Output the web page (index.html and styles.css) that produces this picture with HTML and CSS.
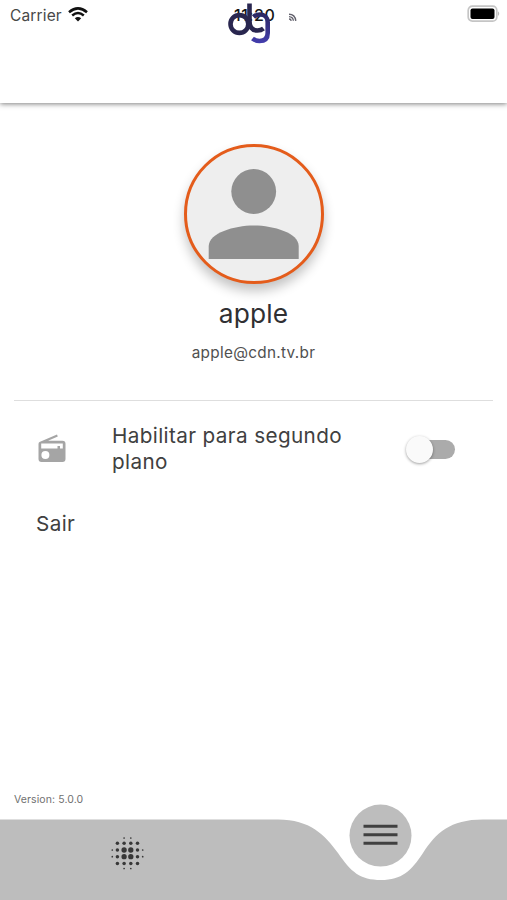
FILE: index.html
```html
<!DOCTYPE html>
<html lang="pt-BR">
<head>
<meta charset="utf-8">
<title>Perfil</title>
<link rel="stylesheet" href="styles.css">
</head>
<body>
<div class="app">
  <header class="header">
    <span class="carrier">Carrier</span>
    <svg class="wifi" width="20" height="15" viewBox="0 0 20 15"><path d="M1 5.2Q10-2.5 19 5.2M4.2 8.5Q10 3.6 15.8 8.5" fill="none" stroke="#111" stroke-width="2.5"/><path d="M6.8 11.2Q10 8.6 13.2 11.2L10 14.4Z" fill="#111"/></svg>
    <span class="time">11:20</span>
    <svg class="logo" width="80" height="48" viewBox="0 0 80 48">
      <defs><linearGradient id="g" gradientUnits="userSpaceOnUse" x1="0" y1="12" x2="0" y2="44"><stop offset="0" stop-color="#29265d"/><stop offset="1" stop-color="#443eb0"/></linearGradient></defs>
      <g fill="none" stroke-width="4.600">
        <path d="M43.500 17C45.500 15 47.500 14.500 50 14.500C54.500 14.500 57.700 17.500 57.700 22V33Q57.700 41 49.500 41Q45.500 41 42.500 38.500" stroke="url(#g)"/>
        <circle cx="29.400" cy="24" r="8.900" stroke="#29264f"/>
        <path d="M39.500 3.500V21Q39.500 30.500 47.500 30.500Q51 30.500 53.500 28.500" stroke="#29264f"/>
      </g>
    </svg>
    <svg class="signal" width="9" height="9" viewBox="0 0 9 9"><path d="M1 1.2Q7 1.2 7.8 7.8M1 3.6Q5 3.8 5.4 7.8M1 6Q3 6 3.2 7.8" fill="none" stroke="#62616c" stroke-width="1.400"/></svg>
    <svg class="battery" width="34" height="18" viewBox="0 0 34 18"><rect x="1.2" y="1.2" width="28.6" height="15" rx="4.2" fill="#fff" stroke="#c5c5c5" stroke-width="1.7"/><rect x="3.5" y="3.5" width="24" height="10.4" rx="2" fill="#000"/><path d="M31.2 6.3Q33.2 8.7 31.2 11.1Z" fill="#aaa"/></svg>
  </header>
  <main class="main">
    <section class="profile">
      <div class="avatar"><svg width="134" height="134" viewBox="0 0 134 134"><circle cx="66.700" cy="44.5" r="22.4" fill="#8f8f8f"/><path d="M21.700 112V99C22 86 47 78.500 66.700 78.500S111.700 86 111.700 99V112Z" fill="#8f8f8f"/></svg></div>
      <h1 class="name">apple</h1>
      <p class="email">apple@cdn.tv.br</p>
    </section>
    <section class="settings">
      <div class="row">
        <svg class="radio" width="30" height="30" viewBox="0 0 30 30"><path d="M2.500 9L20 1.400L20.800 3.600L11 7.700H25.500Q28.500 7.700 28.500 10.700V26Q28.500 29 25.500 29H4.500Q1.500 29 1.500 26V11Q1.500 9.400 2.500 9ZM4.200 10.500V15.500H20.500V13H23V15.500H25.800V10.500Z" fill="#a5a5a5" fill-rule="evenodd"/><circle cx="8.400" cy="22" r="4" fill="#fff"/></svg>
        <span class="label">Habilitar para segundo plano</span>
        <span class="switch"><span class="thumb"></span></span>
      </div>
      <div class="exit">Sair</div>
    </section>
    <div class="version">Version: 5.0.0</div>
  </main>
  <nav class="nav">
    <svg width="507" height="96" viewBox="0 0 507 96">
      <path d="M0 15.500H278C310 15.500 325 31 338 49C351 68 360 76 381 76C402 76 411 67 423 49C436 29 450 15.500 483 15.500H507V96H0Z" fill="#bdbdbd"/>
      <circle cx="380.500" cy="31.600" r="31" fill="#bdbdbd"/>
      <path d="M363.500 22.300H397.500M363.500 30.700H397.500M363.500 39.200H397.500" stroke="#404040" stroke-width="3"/>
      <g fill="#383838">
        <circle cx="124.100" cy="46" r="2.650"/><circle cx="130.800" cy="46" r="2.650"/><circle cx="124.100" cy="52.700" r="2.650"/><circle cx="130.800" cy="52.700" r="2.650"/>
        <circle cx="117.400" cy="39.300" r="1.750"/><circle cx="124.100" cy="39.300" r="1.750"/><circle cx="130.800" cy="39.300" r="1.750"/><circle cx="137.500" cy="39.300" r="1.750"/>
        <circle cx="117.400" cy="46" r="1.750"/><circle cx="137.500" cy="46" r="1.750"/><circle cx="117.400" cy="52.700" r="1.750"/><circle cx="137.500" cy="52.700" r="1.750"/>
        <circle cx="117.400" cy="59.400" r="1.750"/><circle cx="124.100" cy="59.400" r="1.750"/><circle cx="130.800" cy="59.400" r="1.750"/><circle cx="137.500" cy="59.400" r="1.750"/>
        <circle cx="124.100" cy="34" r=".85"/><circle cx="130.800" cy="34" r=".85"/><circle cx="124.100" cy="64.500" r=".85"/><circle cx="130.800" cy="64.500" r=".85"/>
        <circle cx="112.300" cy="46" r=".85"/><circle cx="142.700" cy="46" r=".85"/><circle cx="112.300" cy="52.700" r=".85"/><circle cx="142.700" cy="52.700" r=".85"/>
      </g>
    </svg>
  </nav>
</div>
</body>
</html>
```
FILE: styles.css
```css
* { box-sizing: border-box; }
body { margin: 0; background: #fff; font-family: Inter, sans-serif; color: #404040; }
.app { width: 507px; height: 900px; display: flex; flex-direction: column; overflow: hidden; }
.header { position: relative; flex: none; height: 103px; padding: 6px 6px 0 10px; display: flex; align-items: flex-start; box-shadow: 0 1px 5px rgba(0,0,0,.5); }
.carrier { font-size: 15.5px; line-height: 19px; letter-spacing: .15px; color: #484848; }
.wifi { margin: 1px 0 0 6px; }
.battery { margin: -1px 0 0 auto; }
.time { position: absolute; left: 234px; top: 6px; font-size: 16px; line-height: 19px; letter-spacing: .6px; font-weight: 500; color: #161616; }
.logo { position: absolute; left: 210px; top: 0; }
.signal { position: absolute; left: 288px; top: 13px; }
.main { flex: 1; display: flex; flex-direction: column; padding: 41px 14px 0; }
.profile { display: flex; flex-direction: column; align-items: center; height: 257px; border-bottom: 1px solid #dedede; }
.avatar { width: 140px; height: 140px; border: 3px solid #e45c1b; border-radius: 50%; background: #eee; box-shadow: 0 7px 12px rgba(0,0,0,.24); }
.avatar svg { display: block; }
.name { margin: 14px 0 0; font-size: 26.3px; line-height: 32px; font-weight: 400; letter-spacing: .15px; color: #303033; }
.email { margin: 13px 0 0; font-size: 15.3px; line-height: 20px; letter-spacing: .3px; color: #505050; }
.row { display: flex; align-items: center; height: 96px; padding: 0 38px 0 23px; }
.radio { flex: none; margin-top: -2px; }
.label { width: 245px; margin-left: 45px; font-size: 20.7px; line-height: 26px; letter-spacing: .38px; }
.switch { width: 45px; height: 19px; margin-left: auto; border-radius: 10px; background: #ababab; display: flex; align-items: center; }
.thumb { flex: none; width: 27px; height: 27px; margin-left: -4px; border-radius: 50%; background: #fafafa; box-shadow: 0 1px 3px rgba(0,0,0,.38); }
.exit { margin: 14px 0 0 22px; font-size: 20.7px; line-height: 26px; letter-spacing: .38px; }
.version { margin: auto 0 -2px; font-size: 10.5px; line-height: 13px; letter-spacing: .1px; color: #707070; }
.nav { flex: none; height: 96px; }
.nav svg { display: block; }
```
